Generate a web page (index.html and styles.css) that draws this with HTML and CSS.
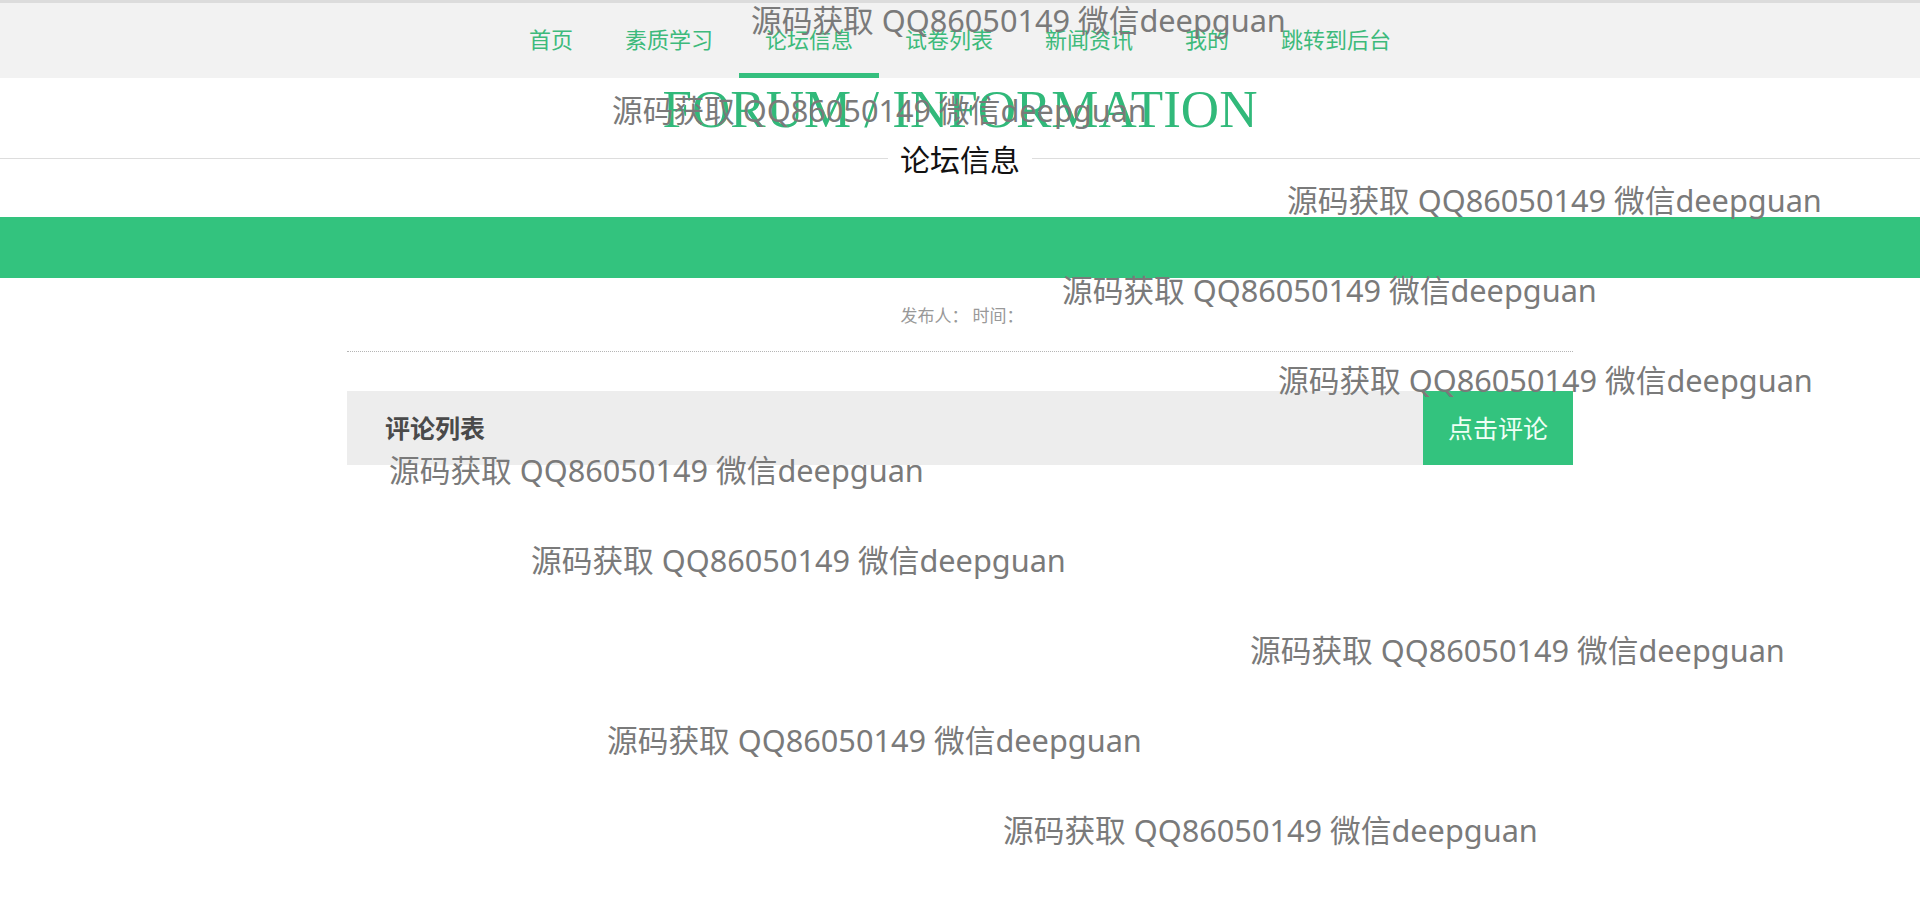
FILE: index.html
```html
<!DOCTYPE html>
<html lang="zh-CN">
<head>
<meta charset="utf-8">
<title>论坛信息</title>
<link rel="stylesheet" href="styles.css">
</head>
<body>
<header class="header">
  <nav class="nav">
    <a class="nav-item" href="#">首页</a>
    <a class="nav-item" href="#">素质学习</a>
    <a class="nav-item active" href="#">论坛信息</a>
    <a class="nav-item" href="#">试卷列表</a>
    <a class="nav-item" href="#">新闻资讯</a>
    <a class="nav-item" href="#">我的</a>
    <a class="nav-item" href="#">跳转到后台</a>
  </nav>
</header>

<main class="main">
  <h1 class="title-en">FORUM / INFORMATION</h1>
  <div class="title-cn"><span>论坛信息</span></div>

  <div class="green-bar"></div>

  <div class="container">
    <div class="meta">发布人：&nbsp;时间：</div>
    <div class="content"></div>
    <div class="comment-head">
      <span class="comment-title">评论列表</span>
      <a class="comment-btn" href="#">点击评论</a>
    </div>
  </div>
</main>

<div class="watermarks">
  <span class="wm wm1">源码获取 QQ86050149 微信deepguan</span>
  <span class="wm wm2">源码获取 QQ86050149 微信deepguan</span>
  <span class="wm wm3">源码获取 QQ86050149 微信deepguan</span>
  <span class="wm wm4">源码获取 QQ86050149 微信deepguan</span>
  <span class="wm wm5">源码获取 QQ86050149 微信deepguan</span>
  <span class="wm wm6">源码获取 QQ86050149 微信deepguan</span>
  <span class="wm wm7">源码获取 QQ86050149 微信deepguan</span>
  <span class="wm wm8">源码获取 QQ86050149 微信deepguan</span>
  <span class="wm wm9">源码获取 QQ86050149 微信deepguan</span>
  <span class="wm wm10">源码获取 QQ86050149 微信deepguan</span>
</div>
</body>
</html>
```

FILE: styles.css
```css
* { box-sizing: border-box; }

html, body {
  margin: 0;
  padding: 0;
  background: #ffffff;
  font-family: "Noto Sans", "Noto Sans CJK SC", sans-serif;
}

body {
  position: relative;
  min-height: 912px;
  overflow: hidden;
}

.header {
  border-top: 3px solid #dcdcdc;
  background: #f2f2f2;
}

.nav {
  display: flex;
  justify-content: center;
  height: 75px;
}

.nav-item {
  display: flex;
  align-items: center;
  padding: 0 26px 6px;
  font-size: 22px;
  color: #3dba7b;
  text-decoration: none;
  font-family: "Noto Sans CJK SC", sans-serif;
}

.nav-item.active {
  box-shadow: inset 0 -5px 0 #35bf7e;
}

.main {
  padding-top: 5px;
}

.title-en {
  margin: 0;
  text-align: center;
  font-family: "Liberation Serif", "Times New Roman", serif;
  font-weight: normal;
  font-size: 53px;
  line-height: 53px;
  color: #31b97a;
}

.title-cn {
  display: flex;
  align-items: center;
  margin-top: 4px;
  font-family: "Noto Sans CJK SC", sans-serif;
  font-size: 30px;
  line-height: 36px;
  color: #111;
}

.title-cn::before,
.title-cn::after {
  content: "";
  flex: 1;
  border-top: 1px solid #dddddd;
}

.title-cn span {
  padding: 0 12px;
}

.green-bar {
  margin-top: 41px;
  height: 61px;
  background: #33c37e;
}

.container {
  width: 1226px;
  margin: 0 auto;
}

.meta {
  margin-top: 26px;
  text-align: center;
  font-family: "Noto Sans CJK SC", sans-serif;
  font-size: 17px;
  line-height: 22px;
  color: #999;
  padding-left: 4px;
}

.content {
  height: 26px;
  border-bottom: 1px dotted #b5b5b5;
}

.comment-head {
  margin-top: 39px;
  display: flex;
  align-items: center;
  justify-content: space-between;
  height: 74px;
  background: #ededed;
  padding-left: 38px;
}

.comment-title {
  font-family: "Noto Sans CJK SC", sans-serif;
  font-weight: bold;
  font-size: 25px;
  line-height: 30px;
  margin-bottom: 2px;
  color: #4a4a4a;
}

.comment-btn {
  display: flex;
  align-items: center;
  justify-content: center;
  width: 150px;
  height: 74px;
  padding-bottom: 2px;
  background: #33c37e;
  color: #effff5;
  font-family: "Noto Sans CJK SC", sans-serif;
  font-size: 25px;
  text-decoration: none;
}

.watermarks {
  position: absolute;
  inset: 0;
  pointer-events: none;
}

.wm {
  position: absolute;
  white-space: nowrap;
  font-size: 30.7px;
  line-height: 40px;
  color: #7a7a7a;
}

.wm1 { left: 751px; top: 0; }
.wm2 { left: 612px; top: 90px; }
.wm3 { left: 1287px; top: 180px; }
.wm4 { left: 1062px; top: 270px; }
.wm5 { left: 1278px; top: 360px; }
.wm6 { left: 389px; top: 450px; }
.wm7 { left: 531px; top: 540px; }
.wm8 { left: 1250px; top: 630px; }
.wm9 { left: 607px; top: 720px; }
.wm10 { left: 1003px; top: 810px; }
```
